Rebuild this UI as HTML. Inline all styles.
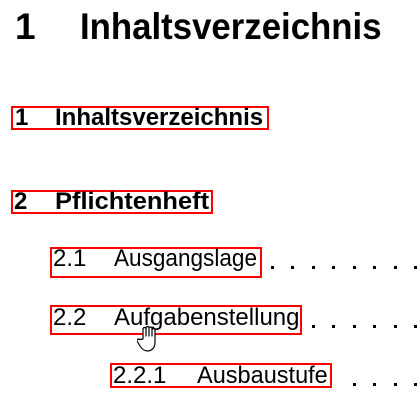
<!DOCTYPE html>
<html><head><meta charset="utf-8"><style>
html,body{margin:0;padding:0;background:#fff;width:417px;height:404px;overflow:hidden;position:relative}
.t{position:absolute;font-family:"Liberation Sans",sans-serif;line-height:1;white-space:nowrap;color:#000;transform-origin:0 0}
.b{font-weight:bold}
.box{position:absolute;border:2px solid #f00;box-sizing:border-box}
.d{position:absolute;width:2.5px;height:2.5px;background:#000}
</style></head><body>
<div class="t b" style="left:15px;top:8px;font-size:37px">1</div>
<div class="t b" style="left:80px;top:8px;font-size:37px;transform:scaleX(0.94)">Inhaltsverzeichnis</div>

<div class="box" style="left:11px;top:106px;width:258px;height:24px"></div>
<div class="t b" style="left:15px;top:106px;font-size:24px">1</div>
<div class="t b" style="left:55px;top:106px;font-size:24px;transform:scaleX(1.0)">Inhaltsverzeichnis</div>

<div class="box" style="left:11px;top:190px;width:202px;height:24px"></div>
<div class="t b" style="left:14px;top:190px;font-size:24px">2</div>
<div class="t b" style="left:55px;top:190px;font-size:24px;transform:scaleX(1.06)">Pflichtenheft</div>

<div class="box" style="left:50px;top:247px;width:212px;height:31px"></div>
<div class="t" style="left:53px;top:247px;font-size:24px">2.1</div>
<div class="t" style="left:114px;top:247px;font-size:24px;transform:scaleX(0.94)">Ausgangslage</div>

<div class="box" style="left:50px;top:305px;width:252px;height:30px"></div>
<div class="t" style="left:53px;top:306px;font-size:24px">2.2</div>
<div class="t" style="left:114px;top:306px;font-size:24px;transform:scaleX(1.0)">Aufgabenstellung</div>

<div class="box" style="left:110px;top:363px;width:222px;height:25px"></div>
<div class="t" style="left:113px;top:364px;font-size:24px">2.2.1</div>
<div class="t" style="left:197px;top:364px;font-size:24px;transform:scaleX(0.98)">Ausbaustufe</div>

<div class="d" style="left:271px;top:266px"></div><div class="d" style="left:291px;top:266px"></div><div class="d" style="left:312px;top:266px"></div><div class="d" style="left:332px;top:266px"></div><div class="d" style="left:353px;top:266px"></div><div class="d" style="left:373px;top:266px"></div><div class="d" style="left:394px;top:266px"></div><div class="d" style="left:414px;top:266px"></div>
<div class="d" style="left:312px;top:325px"></div><div class="d" style="left:332px;top:325px"></div><div class="d" style="left:353px;top:325px"></div><div class="d" style="left:373px;top:325px"></div><div class="d" style="left:394px;top:325px"></div><div class="d" style="left:414px;top:325px"></div>
<div class="d" style="left:353px;top:383px"></div><div class="d" style="left:373px;top:383px"></div><div class="d" style="left:394px;top:383px"></div><div class="d" style="left:414px;top:383px"></div>

<svg style="position:absolute;left:137px;top:325px" width="22" height="28" viewBox="0 0 22 28">
<path d="M6 14 V4 a1.5 1.5 0 0 1 3 0 V11 V3 a1.5 1.5 0 0 1 3 0 V11 V3.5 a1.5 1.5 0 0 1 3 0 V11 V5 a1.5 1.5 0 0 1 3 0 V17 q0 8 -7 9 q-5 0 -8 -5 l-3 -5 a1.5 1.5 0 0 1 2.5 -1.5 Z" fill="#fff" stroke="#000" stroke-width="1.2" stroke-linejoin="round"/>
</svg>
</body></html>
